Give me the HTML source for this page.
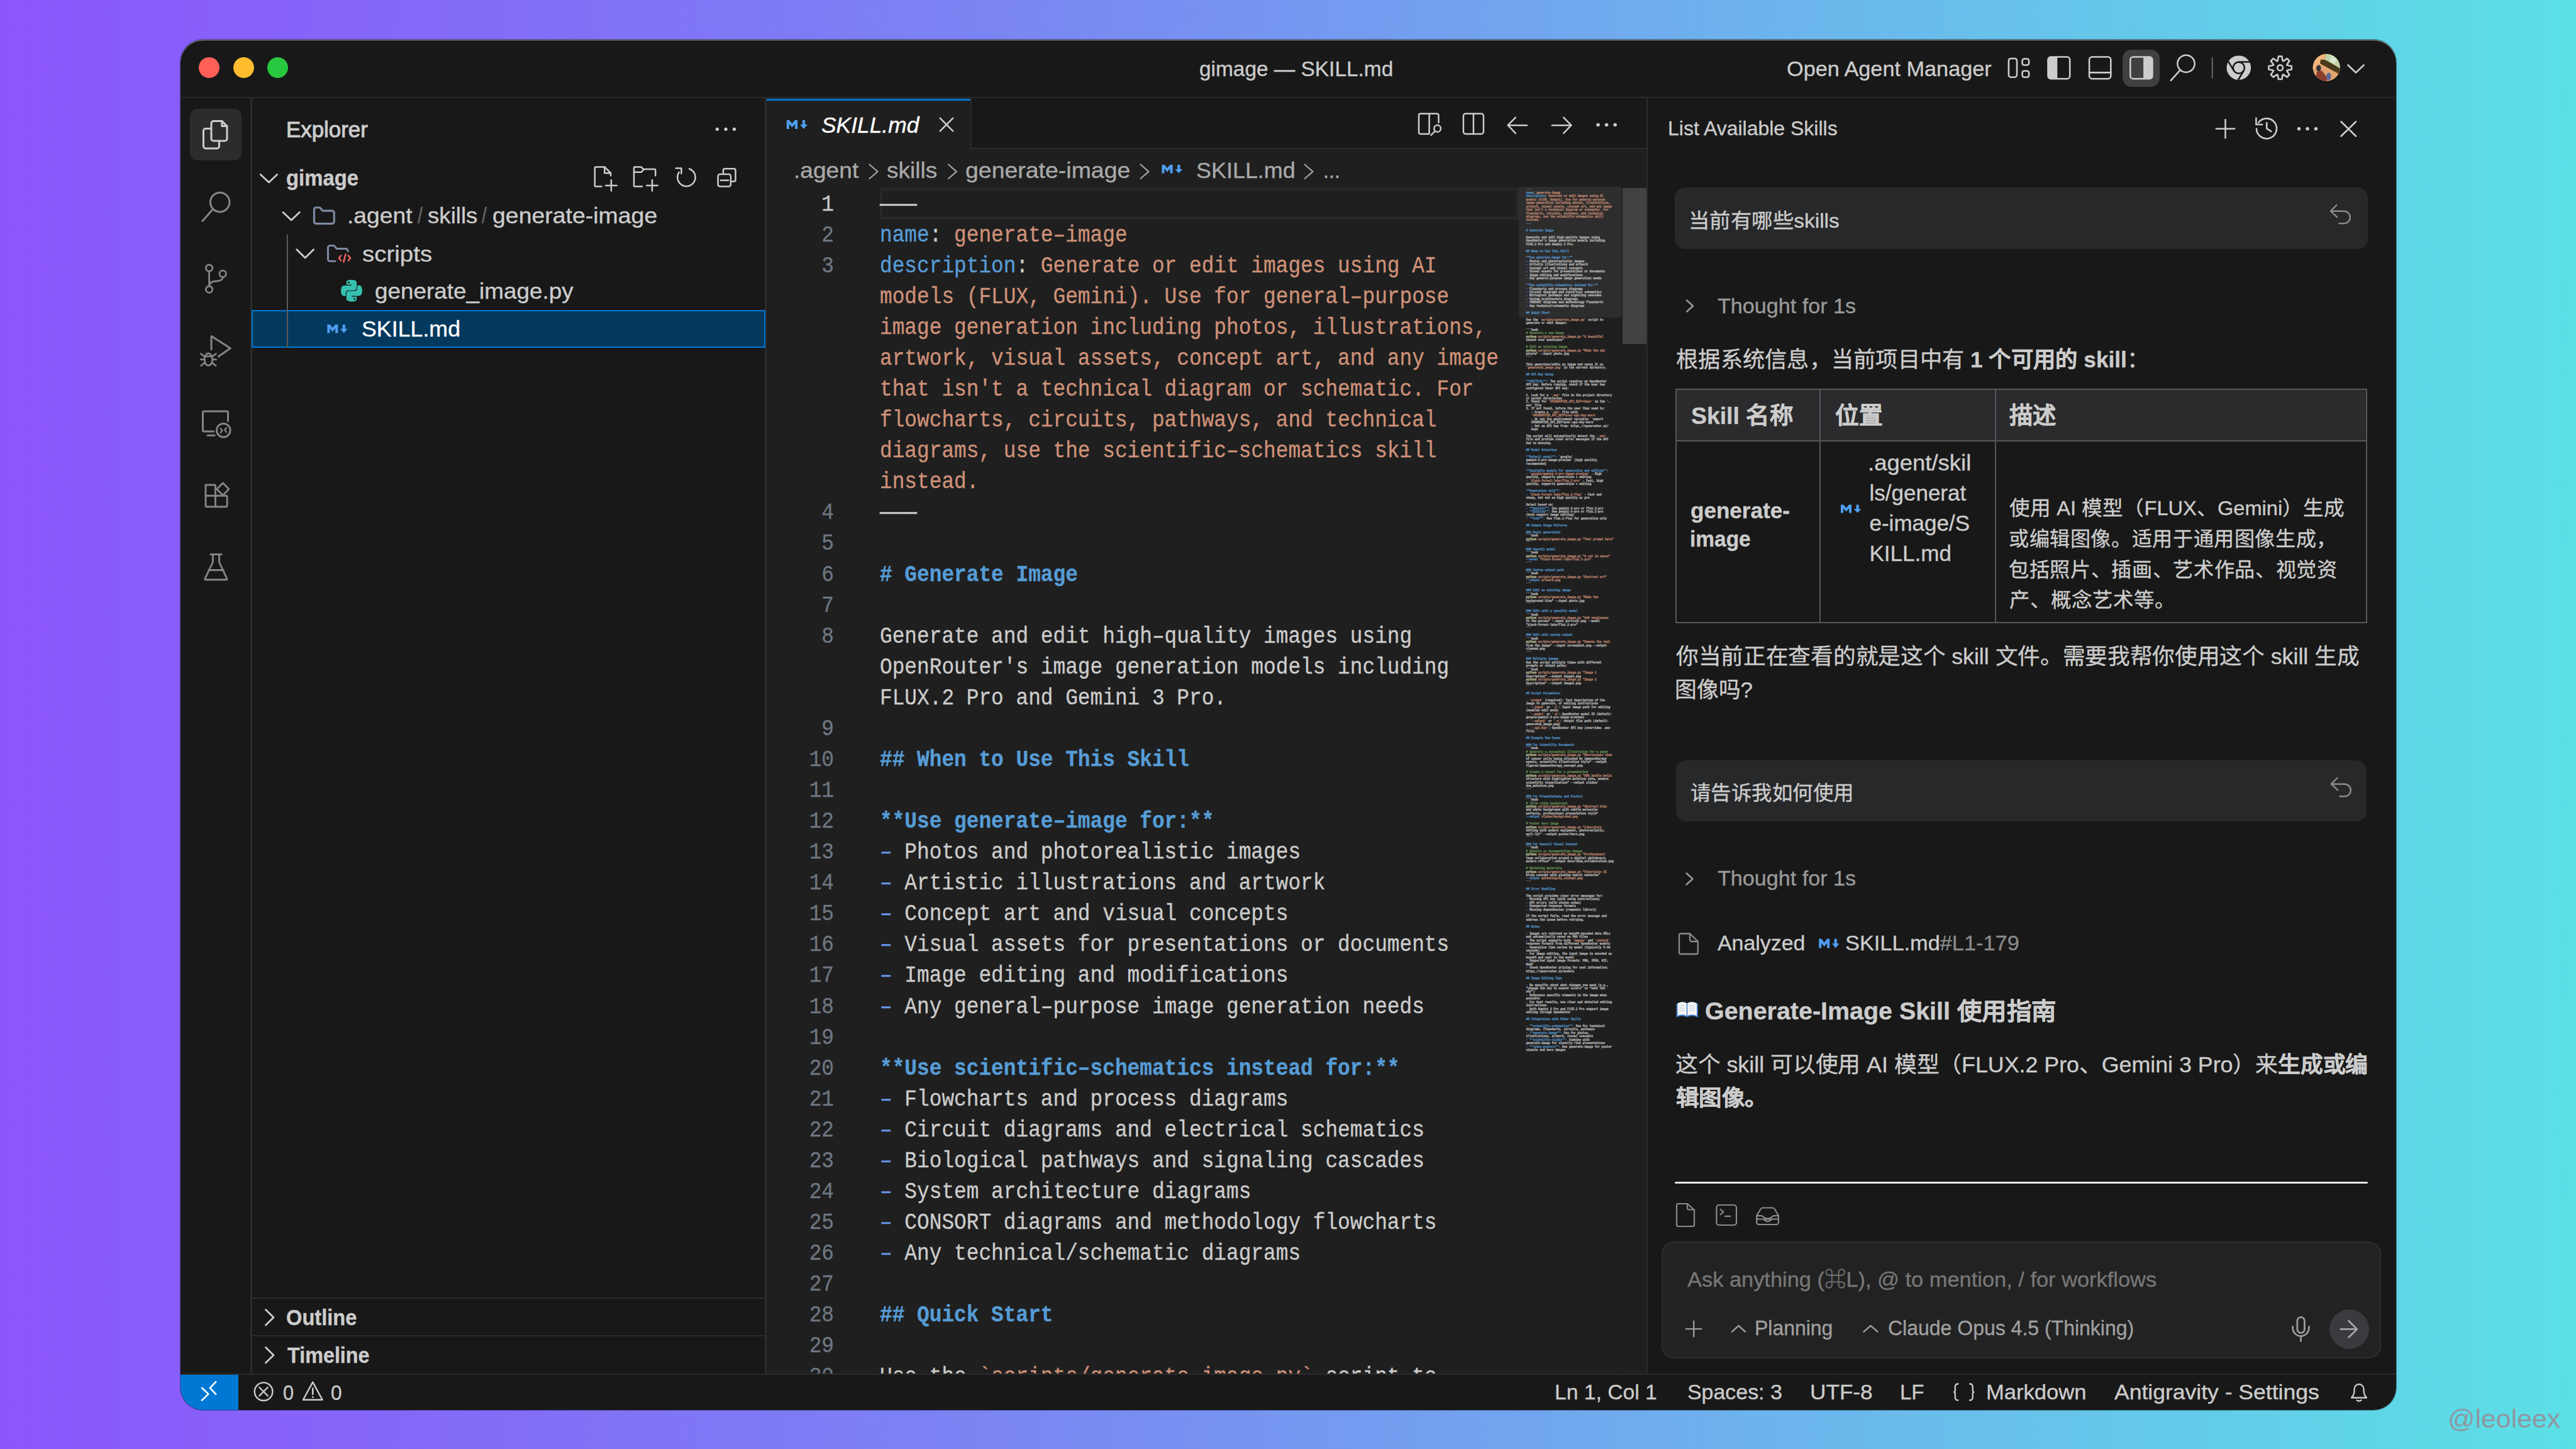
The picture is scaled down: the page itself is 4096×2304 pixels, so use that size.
<!DOCTYPE html><html lang="zh-CN"><head><meta charset="utf-8"><style>
*{margin:0;padding:0;box-sizing:border-box}
html,body{width:4096px;height:2304px;overflow:hidden}
body{position:relative;font-family:"Liberation Sans",sans-serif;background:linear-gradient(90deg,#8b55fb 0%,#7b84f3 38%,#6db3ed 68%,#5be0e6 100%)}
.a{position:absolute}
#win{position:absolute;left:287px;top:63px;width:3523px;height:2179px;border-radius:36px;overflow:hidden;background:#181818;box-shadow:inset 0 1.5px 0 rgba(255,255,255,0.38), 0 0 0 1px rgba(0,0,0,0.35)}
#in{position:absolute;left:-287px;top:-63px;width:4096px;height:2304px}
.t{position:absolute;white-space:pre;line-height:1;color:#cccccc;-webkit-text-stroke-width:0.35px}
.m{font-family:"Liberation Mono",monospace}
svg.ov{position:absolute;left:0;top:0;overflow:visible}
.b{font-weight:bold}
</style></head><body>
<div id="win"><div id="in">
<div class="a" style="left:287px;top:154px;width:3523px;height:2px;background:#2b2b2b;"></div>
<div class="a" style="left:398px;top:156px;width:2.5px;height:2028px;background:#2b2b2b;"></div>
<div class="a" style="left:1216px;top:156px;width:2.5px;height:2028px;background:#2b2b2b;"></div>
<div class="a" style="left:1218.5px;top:156px;width:1399.5px;height:2028px;background:#1f1f1f;"></div>
<div class="a" style="left:1218.5px;top:156px;width:1399.5px;height:81px;background:#181818;"></div>
<div class="a" style="left:1543.5px;top:235px;width:1075px;height:2px;background:#2b2b2b;"></div>
<div class="a" style="left:1218.5px;top:157px;width:325px;height:80px;background:#1f1f1f;"></div>
<div class="a" style="left:1218.5px;top:157px;width:325px;height:3px;background:#0078d4;"></div>
<div class="a" style="left:1542.5px;top:157px;width:2px;height:80px;background:#2b2b2b;"></div>
<div class="a" style="left:2617.5px;top:156px;width:2px;height:2028px;background:#2b2b2b;"></div>
<div class="a" style="left:287px;top:2184px;width:3523px;height:2px;background:#2b2b2b;"></div>
<div class="a" style="left:287px;top:2186px;width:92px;height:56px;background:#0078d4;"></div>
<div class="a" style="left:302.4px;top:173.4px;width:81.5px;height:82px;background:#2c2c2c;border-radius:12px"></div>
<div class="a" style="left:3375.3px;top:78.6px;width:59px;height:59px;background:#404040;border-radius:14px"></div>
<div class="a" style="left:400px;top:492.6px;width:816.5px;height:60px;background:#04395e;border:2.5px solid #0078d4"></div>
<div class="a" style="left:455.7px;top:372.5px;width:2px;height:180px;background:#5a5a5a;"></div>
<div class="a" style="left:400px;top:2063px;width:816px;height:2px;background:#2b2b2b;"></div>
<div class="a" style="left:400px;top:2123px;width:816px;height:2px;background:#2b2b2b;"></div>
<div class="a" style="left:316.0px;top:91.1px;width:33px;height:33px;border-radius:50%;background:#ff5f57"></div>
<div class="a" style="left:370.5px;top:91.1px;width:33px;height:33px;border-radius:50%;background:#febc2e"></div>
<div class="a" style="left:425.0px;top:91.1px;width:33px;height:33px;border-radius:50%;background:#28c840"></div>
<div class="t" id="t0" style="left:1906.99px;top:92.66px;font-size:33px;color:#cccccc;transform:scaleX(1.0123);transform-origin:0 0;">gimage — SKILL.md</div>
<div class="t" id="t1" style="left:2840.96px;top:92.66px;font-size:33px;color:#cccccc;transform:scaleX(1.0383);transform-origin:0 0;">Open Agent Manager</div>
<div class="t" id="t2" style="left:455.41px;top:187.87px;font-size:35px;color:#cccccc;-webkit-text-stroke:1.0px #cccccc;transform:scaleX(0.9962);transform-origin:0 0;">Explorer</div>
<div class="t" id="t3" style="left:455.42px;top:264.87px;font-size:35px;color:#cccccc;font-weight:bold;transform:scaleX(0.9393);transform-origin:0 0;">gimage</div>
<div class="t" id="t4" style="left:551.87px;top:325.37px;font-size:35px;color:#cccccc;transform:scaleX(1.0656);transform-origin:0 0;">.agent</div>
<div class="t" id="t5" style="left:664.00px;top:325.37px;font-size:35px;color:#6a6a6a;transform:scaleX(0.8000);transform-origin:0 0;">/</div>
<div class="t" id="t6" style="left:680.20px;top:325.37px;font-size:35px;color:#cccccc;transform:scaleX(1.0474);transform-origin:0 0;">skills</div>
<div class="t" id="t7" style="left:766.00px;top:325.37px;font-size:35px;color:#6a6a6a;transform:scaleX(0.8000);transform-origin:0 0;">/</div>
<div class="t" id="t8" style="left:783.17px;top:325.37px;font-size:35px;color:#cccccc;transform:scaleX(1.0697);transform-origin:0 0;">generate-image</div>
<div class="t" id="t9" style="left:576.37px;top:385.77px;font-size:35px;color:#cccccc;transform:scaleX(1.0990);transform-origin:0 0;">scripts</div>
<div class="t" id="t10" style="left:596.35px;top:444.67px;font-size:35px;color:#cccccc;transform:scaleX(1.0538);transform-origin:0 0;">generate_image.py</div>
<div class="t" id="t11" style="left:575.37px;top:505.17px;font-size:35px;color:#ffffff;transform:scaleX(1.0219);transform-origin:0 0;">SKILL.md</div>
<div class="t" id="t12" style="left:455.07px;top:2077.17px;font-size:35px;color:#cccccc;font-weight:bold;transform:scaleX(0.9328);transform-origin:0 0;">Outline</div>
<div class="t" id="t13" style="left:456.92px;top:2136.97px;font-size:35px;color:#cccccc;font-weight:bold;transform:scaleX(0.9239);transform-origin:0 0;">Timeline</div>
<div class="t" id="t14" style="left:1306.40px;top:181.69px;font-size:35.8px;color:#ffffff;transform:scaleX(0.9881);transform-origin:0 0;font-style:italic">SKILL.md</div>
<div class="t" id="t15" style="left:1261.88px;top:253.37px;font-size:35px;color:#a9a9a9;transform:scaleX(1.0604);transform-origin:0 0;">.agent</div>
<div class="t" id="t16" style="left:1410.18px;top:253.37px;font-size:35px;color:#a9a9a9;transform:scaleX(1.0587);transform-origin:0 0;">skills</div>
<div class="t" id="t17" style="left:1534.93px;top:253.37px;font-size:35px;color:#a9a9a9;transform:scaleX(1.0700);transform-origin:0 0;">generate-image</div>
<div class="t" id="t18" style="left:1901.97px;top:253.37px;font-size:35px;color:#a9a9a9;transform:scaleX(1.0265);transform-origin:0 0;">SKILL.md</div>
<div class="t" id="t19" style="left:2104.16px;top:253.37px;font-size:35px;color:#a9a9a9;transform:scaleX(0.9200);transform-origin:0 0;">...</div>
<div class="a" style="left:1218.5px;top:237px;width:1399px;height:1947px;overflow:hidden">
<div class="a" style="left:-1218.5px;top:-237px;width:4096px;height:2304px">
<div class="a" style="left:1398.8px;top:299px;width:1016px;height:49.5px;background:transparent;border:4px solid #282828"></div>
<div class="t m" style="left:1225px;width:101px;text-align:right;top:300.70px;height:49.07px;line-height:49.07px;font-size:36.4px;color:#cccccc;transform:scaleX(0.9011);transform-origin:100% 0">1</div>
<div class="t m" style="left:1398.6px;top:300.70px;height:49.07px;line-height:49.07px;font-size:36.4px;color:#cccccc;transform:scaleX(0.9011);transform-origin:0 0"><span style="color:#cccccc">———</span></div>
<div class="t m" style="left:1225px;width:101px;text-align:right;top:349.77px;height:49.07px;line-height:49.07px;font-size:36.4px;color:#6e7681;transform:scaleX(0.9011);transform-origin:100% 0">2</div>
<div class="t m" style="left:1398.6px;top:349.77px;height:49.07px;line-height:49.07px;font-size:36.4px;color:#cccccc;transform:scaleX(0.9011);transform-origin:0 0"><span style="color:#569cd6">name</span><span style="color:#cccccc">: </span><span style="color:#ce9178">generate–image</span></div>
<div class="t m" style="left:1225px;width:101px;text-align:right;top:398.84px;height:49.07px;line-height:49.07px;font-size:36.4px;color:#6e7681;transform:scaleX(0.9011);transform-origin:100% 0">3</div>
<div class="t m" style="left:1398.6px;top:398.84px;height:49.07px;line-height:49.07px;font-size:36.4px;color:#cccccc;transform:scaleX(0.9011);transform-origin:0 0"><span style="color:#569cd6">description</span><span style="color:#cccccc">: </span><span style="color:#ce9178">Generate or edit images using AI</span></div>
<div class="t m" style="left:1398.6px;top:447.91px;height:49.07px;line-height:49.07px;font-size:36.4px;color:#cccccc;transform:scaleX(0.9011);transform-origin:0 0"><span style="color:#ce9178">models (FLUX, Gemini). Use for general–purpose</span></div>
<div class="t m" style="left:1398.6px;top:496.98px;height:49.07px;line-height:49.07px;font-size:36.4px;color:#cccccc;transform:scaleX(0.9011);transform-origin:0 0"><span style="color:#ce9178">image generation including photos, illustrations,</span></div>
<div class="t m" style="left:1398.6px;top:546.05px;height:49.07px;line-height:49.07px;font-size:36.4px;color:#cccccc;transform:scaleX(0.9011);transform-origin:0 0"><span style="color:#ce9178">artwork, visual assets, concept art, and any image</span></div>
<div class="t m" style="left:1398.6px;top:595.12px;height:49.07px;line-height:49.07px;font-size:36.4px;color:#cccccc;transform:scaleX(0.9011);transform-origin:0 0"><span style="color:#ce9178">that isn&#x27;t a technical diagram or schematic. For</span></div>
<div class="t m" style="left:1398.6px;top:644.19px;height:49.07px;line-height:49.07px;font-size:36.4px;color:#cccccc;transform:scaleX(0.9011);transform-origin:0 0"><span style="color:#ce9178">flowcharts, circuits, pathways, and technical</span></div>
<div class="t m" style="left:1398.6px;top:693.26px;height:49.07px;line-height:49.07px;font-size:36.4px;color:#cccccc;transform:scaleX(0.9011);transform-origin:0 0"><span style="color:#ce9178">diagrams, use the scientific–schematics skill</span></div>
<div class="t m" style="left:1398.6px;top:742.33px;height:49.07px;line-height:49.07px;font-size:36.4px;color:#cccccc;transform:scaleX(0.9011);transform-origin:0 0"><span style="color:#ce9178">instead.</span></div>
<div class="t m" style="left:1225px;width:101px;text-align:right;top:791.40px;height:49.07px;line-height:49.07px;font-size:36.4px;color:#6e7681;transform:scaleX(0.9011);transform-origin:100% 0">4</div>
<div class="t m" style="left:1398.6px;top:791.40px;height:49.07px;line-height:49.07px;font-size:36.4px;color:#cccccc;transform:scaleX(0.9011);transform-origin:0 0"><span style="color:#cccccc">———</span></div>
<div class="t m" style="left:1225px;width:101px;text-align:right;top:840.47px;height:49.07px;line-height:49.07px;font-size:36.4px;color:#6e7681;transform:scaleX(0.9011);transform-origin:100% 0">5</div>
<div class="t m" style="left:1398.6px;top:840.47px;height:49.07px;line-height:49.07px;font-size:36.4px;color:#cccccc;transform:scaleX(0.9011);transform-origin:0 0"></div>
<div class="t m" style="left:1225px;width:101px;text-align:right;top:889.54px;height:49.07px;line-height:49.07px;font-size:36.4px;color:#6e7681;transform:scaleX(0.9011);transform-origin:100% 0">6</div>
<div class="t m" style="left:1398.6px;top:889.54px;height:49.07px;line-height:49.07px;font-size:36.4px;color:#cccccc;transform:scaleX(0.9011);transform-origin:0 0"><span style="color:#569cd6;font-weight:bold"># Generate Image</span></div>
<div class="t m" style="left:1225px;width:101px;text-align:right;top:938.61px;height:49.07px;line-height:49.07px;font-size:36.4px;color:#6e7681;transform:scaleX(0.9011);transform-origin:100% 0">7</div>
<div class="t m" style="left:1398.6px;top:938.61px;height:49.07px;line-height:49.07px;font-size:36.4px;color:#cccccc;transform:scaleX(0.9011);transform-origin:0 0"></div>
<div class="t m" style="left:1225px;width:101px;text-align:right;top:987.68px;height:49.07px;line-height:49.07px;font-size:36.4px;color:#6e7681;transform:scaleX(0.9011);transform-origin:100% 0">8</div>
<div class="t m" style="left:1398.6px;top:987.68px;height:49.07px;line-height:49.07px;font-size:36.4px;color:#cccccc;transform:scaleX(0.9011);transform-origin:0 0"><span style="color:#cccccc">Generate and edit high–quality images using</span></div>
<div class="t m" style="left:1398.6px;top:1036.75px;height:49.07px;line-height:49.07px;font-size:36.4px;color:#cccccc;transform:scaleX(0.9011);transform-origin:0 0"><span style="color:#cccccc">OpenRouter&#x27;s image generation models including</span></div>
<div class="t m" style="left:1398.6px;top:1085.82px;height:49.07px;line-height:49.07px;font-size:36.4px;color:#cccccc;transform:scaleX(0.9011);transform-origin:0 0"><span style="color:#cccccc">FLUX.2 Pro and Gemini 3 Pro.</span></div>
<div class="t m" style="left:1225px;width:101px;text-align:right;top:1134.89px;height:49.07px;line-height:49.07px;font-size:36.4px;color:#6e7681;transform:scaleX(0.9011);transform-origin:100% 0">9</div>
<div class="t m" style="left:1398.6px;top:1134.89px;height:49.07px;line-height:49.07px;font-size:36.4px;color:#cccccc;transform:scaleX(0.9011);transform-origin:0 0"></div>
<div class="t m" style="left:1225px;width:101px;text-align:right;top:1183.96px;height:49.07px;line-height:49.07px;font-size:36.4px;color:#6e7681;transform:scaleX(0.9011);transform-origin:100% 0">10</div>
<div class="t m" style="left:1398.6px;top:1183.96px;height:49.07px;line-height:49.07px;font-size:36.4px;color:#cccccc;transform:scaleX(0.9011);transform-origin:0 0"><span style="color:#569cd6;font-weight:bold">## When to Use This Skill</span></div>
<div class="t m" style="left:1225px;width:101px;text-align:right;top:1233.03px;height:49.07px;line-height:49.07px;font-size:36.4px;color:#6e7681;transform:scaleX(0.9011);transform-origin:100% 0">11</div>
<div class="t m" style="left:1398.6px;top:1233.03px;height:49.07px;line-height:49.07px;font-size:36.4px;color:#cccccc;transform:scaleX(0.9011);transform-origin:0 0"></div>
<div class="t m" style="left:1225px;width:101px;text-align:right;top:1282.10px;height:49.07px;line-height:49.07px;font-size:36.4px;color:#6e7681;transform:scaleX(0.9011);transform-origin:100% 0">12</div>
<div class="t m" style="left:1398.6px;top:1282.10px;height:49.07px;line-height:49.07px;font-size:36.4px;color:#cccccc;transform:scaleX(0.9011);transform-origin:0 0"><span style="color:#569cd6;font-weight:bold">**Use generate–image for:**</span></div>
<div class="t m" style="left:1225px;width:101px;text-align:right;top:1331.17px;height:49.07px;line-height:49.07px;font-size:36.4px;color:#6e7681;transform:scaleX(0.9011);transform-origin:100% 0">13</div>
<div class="t m" style="left:1398.6px;top:1331.17px;height:49.07px;line-height:49.07px;font-size:36.4px;color:#cccccc;transform:scaleX(0.9011);transform-origin:0 0"><span style="color:#6796e6">–</span><span style="color:#cccccc"> Photos and photorealistic images</span></div>
<div class="t m" style="left:1225px;width:101px;text-align:right;top:1380.24px;height:49.07px;line-height:49.07px;font-size:36.4px;color:#6e7681;transform:scaleX(0.9011);transform-origin:100% 0">14</div>
<div class="t m" style="left:1398.6px;top:1380.24px;height:49.07px;line-height:49.07px;font-size:36.4px;color:#cccccc;transform:scaleX(0.9011);transform-origin:0 0"><span style="color:#6796e6">–</span><span style="color:#cccccc"> Artistic illustrations and artwork</span></div>
<div class="t m" style="left:1225px;width:101px;text-align:right;top:1429.31px;height:49.07px;line-height:49.07px;font-size:36.4px;color:#6e7681;transform:scaleX(0.9011);transform-origin:100% 0">15</div>
<div class="t m" style="left:1398.6px;top:1429.31px;height:49.07px;line-height:49.07px;font-size:36.4px;color:#cccccc;transform:scaleX(0.9011);transform-origin:0 0"><span style="color:#6796e6">–</span><span style="color:#cccccc"> Concept art and visual concepts</span></div>
<div class="t m" style="left:1225px;width:101px;text-align:right;top:1478.38px;height:49.07px;line-height:49.07px;font-size:36.4px;color:#6e7681;transform:scaleX(0.9011);transform-origin:100% 0">16</div>
<div class="t m" style="left:1398.6px;top:1478.38px;height:49.07px;line-height:49.07px;font-size:36.4px;color:#cccccc;transform:scaleX(0.9011);transform-origin:0 0"><span style="color:#6796e6">–</span><span style="color:#cccccc"> Visual assets for presentations or documents</span></div>
<div class="t m" style="left:1225px;width:101px;text-align:right;top:1527.45px;height:49.07px;line-height:49.07px;font-size:36.4px;color:#6e7681;transform:scaleX(0.9011);transform-origin:100% 0">17</div>
<div class="t m" style="left:1398.6px;top:1527.45px;height:49.07px;line-height:49.07px;font-size:36.4px;color:#cccccc;transform:scaleX(0.9011);transform-origin:0 0"><span style="color:#6796e6">–</span><span style="color:#cccccc"> Image editing and modifications</span></div>
<div class="t m" style="left:1225px;width:101px;text-align:right;top:1576.52px;height:49.07px;line-height:49.07px;font-size:36.4px;color:#6e7681;transform:scaleX(0.9011);transform-origin:100% 0">18</div>
<div class="t m" style="left:1398.6px;top:1576.52px;height:49.07px;line-height:49.07px;font-size:36.4px;color:#cccccc;transform:scaleX(0.9011);transform-origin:0 0"><span style="color:#6796e6">–</span><span style="color:#cccccc"> Any general–purpose image generation needs</span></div>
<div class="t m" style="left:1225px;width:101px;text-align:right;top:1625.59px;height:49.07px;line-height:49.07px;font-size:36.4px;color:#6e7681;transform:scaleX(0.9011);transform-origin:100% 0">19</div>
<div class="t m" style="left:1398.6px;top:1625.59px;height:49.07px;line-height:49.07px;font-size:36.4px;color:#cccccc;transform:scaleX(0.9011);transform-origin:0 0"></div>
<div class="t m" style="left:1225px;width:101px;text-align:right;top:1674.66px;height:49.07px;line-height:49.07px;font-size:36.4px;color:#6e7681;transform:scaleX(0.9011);transform-origin:100% 0">20</div>
<div class="t m" style="left:1398.6px;top:1674.66px;height:49.07px;line-height:49.07px;font-size:36.4px;color:#cccccc;transform:scaleX(0.9011);transform-origin:0 0"><span style="color:#569cd6;font-weight:bold">**Use scientific–schematics instead for:**</span></div>
<div class="t m" style="left:1225px;width:101px;text-align:right;top:1723.73px;height:49.07px;line-height:49.07px;font-size:36.4px;color:#6e7681;transform:scaleX(0.9011);transform-origin:100% 0">21</div>
<div class="t m" style="left:1398.6px;top:1723.73px;height:49.07px;line-height:49.07px;font-size:36.4px;color:#cccccc;transform:scaleX(0.9011);transform-origin:0 0"><span style="color:#6796e6">–</span><span style="color:#cccccc"> Flowcharts and process diagrams</span></div>
<div class="t m" style="left:1225px;width:101px;text-align:right;top:1772.80px;height:49.07px;line-height:49.07px;font-size:36.4px;color:#6e7681;transform:scaleX(0.9011);transform-origin:100% 0">22</div>
<div class="t m" style="left:1398.6px;top:1772.80px;height:49.07px;line-height:49.07px;font-size:36.4px;color:#cccccc;transform:scaleX(0.9011);transform-origin:0 0"><span style="color:#6796e6">–</span><span style="color:#cccccc"> Circuit diagrams and electrical schematics</span></div>
<div class="t m" style="left:1225px;width:101px;text-align:right;top:1821.87px;height:49.07px;line-height:49.07px;font-size:36.4px;color:#6e7681;transform:scaleX(0.9011);transform-origin:100% 0">23</div>
<div class="t m" style="left:1398.6px;top:1821.87px;height:49.07px;line-height:49.07px;font-size:36.4px;color:#cccccc;transform:scaleX(0.9011);transform-origin:0 0"><span style="color:#6796e6">–</span><span style="color:#cccccc"> Biological pathways and signaling cascades</span></div>
<div class="t m" style="left:1225px;width:101px;text-align:right;top:1870.94px;height:49.07px;line-height:49.07px;font-size:36.4px;color:#6e7681;transform:scaleX(0.9011);transform-origin:100% 0">24</div>
<div class="t m" style="left:1398.6px;top:1870.94px;height:49.07px;line-height:49.07px;font-size:36.4px;color:#cccccc;transform:scaleX(0.9011);transform-origin:0 0"><span style="color:#6796e6">–</span><span style="color:#cccccc"> System architecture diagrams</span></div>
<div class="t m" style="left:1225px;width:101px;text-align:right;top:1920.01px;height:49.07px;line-height:49.07px;font-size:36.4px;color:#6e7681;transform:scaleX(0.9011);transform-origin:100% 0">25</div>
<div class="t m" style="left:1398.6px;top:1920.01px;height:49.07px;line-height:49.07px;font-size:36.4px;color:#cccccc;transform:scaleX(0.9011);transform-origin:0 0"><span style="color:#6796e6">–</span><span style="color:#cccccc"> CONSORT diagrams and methodology flowcharts</span></div>
<div class="t m" style="left:1225px;width:101px;text-align:right;top:1969.08px;height:49.07px;line-height:49.07px;font-size:36.4px;color:#6e7681;transform:scaleX(0.9011);transform-origin:100% 0">26</div>
<div class="t m" style="left:1398.6px;top:1969.08px;height:49.07px;line-height:49.07px;font-size:36.4px;color:#cccccc;transform:scaleX(0.9011);transform-origin:0 0"><span style="color:#6796e6">–</span><span style="color:#cccccc"> Any technical/schematic diagrams</span></div>
<div class="t m" style="left:1225px;width:101px;text-align:right;top:2018.15px;height:49.07px;line-height:49.07px;font-size:36.4px;color:#6e7681;transform:scaleX(0.9011);transform-origin:100% 0">27</div>
<div class="t m" style="left:1398.6px;top:2018.15px;height:49.07px;line-height:49.07px;font-size:36.4px;color:#cccccc;transform:scaleX(0.9011);transform-origin:0 0"></div>
<div class="t m" style="left:1225px;width:101px;text-align:right;top:2067.22px;height:49.07px;line-height:49.07px;font-size:36.4px;color:#6e7681;transform:scaleX(0.9011);transform-origin:100% 0">28</div>
<div class="t m" style="left:1398.6px;top:2067.22px;height:49.07px;line-height:49.07px;font-size:36.4px;color:#cccccc;transform:scaleX(0.9011);transform-origin:0 0"><span style="color:#569cd6;font-weight:bold">## Quick Start</span></div>
<div class="t m" style="left:1225px;width:101px;text-align:right;top:2116.29px;height:49.07px;line-height:49.07px;font-size:36.4px;color:#6e7681;transform:scaleX(0.9011);transform-origin:100% 0">29</div>
<div class="t m" style="left:1398.6px;top:2116.29px;height:49.07px;line-height:49.07px;font-size:36.4px;color:#cccccc;transform:scaleX(0.9011);transform-origin:0 0"></div>
<div class="t m" style="left:1225px;width:101px;text-align:right;top:2165.36px;height:49.07px;line-height:49.07px;font-size:36.4px;color:#6e7681;transform:scaleX(0.9011);transform-origin:100% 0">30</div>
<div class="t m" style="left:1398.6px;top:2165.36px;height:49.07px;line-height:49.07px;font-size:36.4px;color:#cccccc;transform:scaleX(0.9011);transform-origin:0 0"><span style="color:#cccccc">Use the </span><span style="color:#ce9178">`scripts/generate_image.py`</span><span style="color:#cccccc"> script to</span></div>
</div></div>
<div class="a" style="left:2414.5px;top:297px;width:165px;height:208px;background:rgba(121,121,121,0.16);"></div>
<div class="a" style="left:2579.5px;top:299px;width:38px;height:248px;background:rgba(121,121,121,0.40);"></div>
<div class="a" style="left:2578.8px;top:237px;width:1.6px;height:1947px;background:#191919;"></div>
<div class="a" style="left:2414px;top:237px;width:165px;height:1947px;overflow:hidden"><div class="t m" style="left:12.50px;top:61.40px;font-size:4.55px;line-height:5.45px;font-weight:bold;opacity:0.78"><span style="color:#569cd6">---</span><span style="color:#ce9178"></span>
<span style="color:#569cd6">name</span><span style="color:#cccccc">: </span><span style="color:#ce9178">generate-image</span>
<span style="color:#569cd6">description</span><span style="color:#cccccc">: </span><span style="color:#ce9178">Generate or edit images using AI</span>
<span style="color:#ce9178">models (FLUX, Gemini). Use for general-purpose</span>
<span style="color:#ce9178">image generation including photos, illustrations,</span>
<span style="color:#ce9178">artwork, visual assets, concept art, and any image</span>
<span style="color:#ce9178">that isn&#x27;t a technical diagram or schematic. For</span>
<span style="color:#ce9178">flowcharts, circuits, pathways, and technical</span>
<span style="color:#ce9178">diagrams, use the scientific-schematics skill</span>
<span style="color:#ce9178">instead.</span>
<span style="color:#569cd6">---</span><span style="color:#ce9178"></span>
<span style="color:#cccccc"></span>
<span style="color:#569cd6"># Generate Image</span>
<span style="color:#cccccc"></span>
<span style="color:#cccccc">Generate and edit high-quality images using</span>
<span style="color:#cccccc">OpenRouter&#x27;s image generation models including</span>
<span style="color:#cccccc">FLUX.2 Pro and Gemini 3 Pro.</span>
<span style="color:#cccccc"></span>
<span style="color:#569cd6">## When to Use This Skill</span>
<span style="color:#cccccc"></span>
<span style="color:#569cd6">**Use generate-image for:**</span><span style="color:#cccccc"></span>
<span style="color:#6796e6">-</span><span style="color:#cccccc"> Photos and photorealistic images</span>
<span style="color:#6796e6">-</span><span style="color:#cccccc"> Artistic illustrations and artwork</span>
<span style="color:#6796e6">-</span><span style="color:#cccccc"> Concept art and visual concepts</span>
<span style="color:#6796e6">-</span><span style="color:#cccccc"> Visual assets for presentations or documents</span>
<span style="color:#6796e6">-</span><span style="color:#cccccc"> Image editing and modifications</span>
<span style="color:#6796e6">-</span><span style="color:#cccccc"> Any general-purpose image generation needs</span>
<span style="color:#cccccc"></span>
<span style="color:#569cd6">**Use scientific-schematics instead for:**</span><span style="color:#cccccc"></span>
<span style="color:#6796e6">-</span><span style="color:#cccccc"> Flowcharts and process diagrams</span>
<span style="color:#6796e6">-</span><span style="color:#cccccc"> Circuit diagrams and electrical schematics</span>
<span style="color:#6796e6">-</span><span style="color:#cccccc"> Biological pathways and signaling cascades</span>
<span style="color:#6796e6">-</span><span style="color:#cccccc"> System architecture diagrams</span>
<span style="color:#6796e6">-</span><span style="color:#cccccc"> CONSORT diagrams and methodology flowcharts</span>
<span style="color:#6796e6">-</span><span style="color:#cccccc"> Any technical/schematic diagrams</span>
<span style="color:#cccccc"></span>
<span style="color:#569cd6">## Quick Start</span>
<span style="color:#cccccc"></span>
<span style="color:#cccccc">Use the </span><span style="color:#ce9178">`scripts/generate_image.py`</span><span style="color:#cccccc"> script to</span>
<span style="color:#cccccc">generate or edit images:</span>
<span style="color:#cccccc"></span>
<span style="color:#cccccc">```bash</span>
<span style="color:#6a9955"># Generate a new image</span>
<span style="color:#dcdcaa">python</span><span style="color:#ce9178"> scripts/generate_image.py &quot;A beautiful</span>
<span style="color:#cccccc">sunset over mountains&quot;</span>
<span style="color:#cccccc"></span>
<span style="color:#6a9955"># Edit an existing image</span>
<span style="color:#dcdcaa">python</span><span style="color:#ce9178"> scripts/generate_image.py &quot;Make the sky</span>
<span style="color:#cccccc">purple&quot; --input photo.jpg</span>
<span style="color:#cccccc">```</span>
<span style="color:#cccccc"></span>
<span style="color:#cccccc">This generates/edits an image and saves it as</span>
<span style="color:#cccccc"></span><span style="color:#ce9178">`generated_image.png`</span><span style="color:#cccccc"> in the current directory.</span>
<span style="color:#cccccc"></span>
<span style="color:#569cd6">## API Key Setup</span>
<span style="color:#cccccc"></span>
<span style="color:#569cd6">**CRITICAL**:</span><span style="color:#cccccc"> The script requires an OpenRouter</span>
<span style="color:#cccccc">API key. Before running, check if the user has</span>
<span style="color:#cccccc">configured their API key:</span>
<span style="color:#cccccc"></span>
<span style="color:#cccccc">1. Look for a </span><span style="color:#ce9178">`.env`</span><span style="color:#cccccc"> file in the project directory</span>
<span style="color:#cccccc">or parent directories</span>
<span style="color:#cccccc">2. Check for </span><span style="color:#ce9178">`OPENROUTER_API_KEY=&lt;key&gt;`</span><span style="color:#cccccc"> in the `.</span>
<span style="color:#cccccc">env` file</span>
<span style="color:#cccccc">3. If not found, inform the user they need to:</span>
<span style="color:#cccccc">   - Create a </span><span style="color:#ce9178">`.env`</span><span style="color:#cccccc"> file with</span>
<span style="color:#cccccc">   </span><span style="color:#ce9178">`OPENROUTER_API_KEY=your-api-key-here`</span><span style="color:#cccccc"></span>
<span style="color:#cccccc">   - Or set the environment variable: `export</span>
<span style="color:#cccccc">   OPENROUTER_API_KEY=your-api-key-here`</span>
<span style="color:#cccccc">   - Get an API key from: https_//openrouter.ai/</span>
<span style="color:#cccccc">   keys</span>
<span style="color:#cccccc"></span>
<span style="color:#cccccc">The script will automatically detect the </span><span style="color:#ce9178">`.env`</span><span style="color:#cccccc"></span>
<span style="color:#cccccc">file and provide clear error messages if the API</span>
<span style="color:#cccccc">key is missing.</span>
<span style="color:#cccccc"></span>
<span style="color:#569cd6">## Model Selection</span>
<span style="color:#cccccc"></span>
<span style="color:#569cd6">**Default model**:</span><span style="color:#cccccc"> `google/</span>
<span style="color:#cccccc">gemini-3-pro-image-preview` (high quality,</span>
<span style="color:#cccccc">recommended)</span>
<span style="color:#cccccc"></span>
<span style="color:#569cd6">**Available models for generation and editing**:</span><span style="color:#cccccc"></span>
<span style="color:#6796e6">-</span><span style="color:#cccccc"> </span><span style="color:#ce9178">`google/gemini-3-pro-image-preview`</span><span style="color:#cccccc"> - High</span>
<span style="color:#cccccc">quality, supports generation + editing</span>
<span style="color:#6796e6">-</span><span style="color:#cccccc"> </span><span style="color:#ce9178">`black-forest-labs/flux.2-pro`</span><span style="color:#cccccc"> - Fast, high</span>
<span style="color:#cccccc">quality, supports generation + editing</span>
<span style="color:#cccccc"></span>
<span style="color:#569cd6">**Generation only**:</span><span style="color:#cccccc"></span>
<span style="color:#6796e6">-</span><span style="color:#cccccc"> </span><span style="color:#ce9178">`black-forest-labs/flux.2-flex`</span><span style="color:#cccccc"> - Fast and</span>
<span style="color:#cccccc">cheap, but not as high quality as pro</span>
<span style="color:#cccccc"></span>
<span style="color:#cccccc">Select based on:</span>
<span style="color:#6796e6">- </span><span style="color:#569cd6">**Quality**:</span><span style="color:#cccccc"> Use gemini-3-pro or flux.2-pro</span>
<span style="color:#6796e6">- </span><span style="color:#569cd6">**Editing**:</span><span style="color:#cccccc"> Use gemini-3-pro or flux.2-pro</span>
<span style="color:#cccccc">(both support image editing)</span>
<span style="color:#6796e6">- </span><span style="color:#569cd6">**Cost**:</span><span style="color:#cccccc"> Use flux.2-flex for generation only</span>
<span style="color:#cccccc"></span>
<span style="color:#569cd6">## Common Usage Patterns</span>
<span style="color:#cccccc"></span>
<span style="color:#569cd6">### Basic generation</span>
<span style="color:#cccccc">```bash</span>
<span style="color:#dcdcaa">python</span><span style="color:#ce9178"> scripts/generate_image.py &quot;Your prompt here&quot;</span>
<span style="color:#cccccc">```</span>
<span style="color:#cccccc"></span>
<span style="color:#569cd6">### Specify model</span>
<span style="color:#cccccc">```bash</span>
<span style="color:#dcdcaa">python</span><span style="color:#ce9178"> scripts/generate_image.py &quot;A cat in space&quot;</span>
<span style="color:#569cd6">--model</span><span style="color:#ce9178"> &quot;black-forest-labs/flux.2-pro&quot;</span>
<span style="color:#cccccc">```</span>
<span style="color:#cccccc"></span>
<span style="color:#569cd6">### Custom output path</span>
<span style="color:#cccccc">```bash</span>
<span style="color:#dcdcaa">python</span><span style="color:#ce9178"> scripts/generate_image.py &quot;Abstract art&quot;</span>
<span style="color:#569cd6">--output</span><span style="color:#ce9178"> artwork.png</span>
<span style="color:#cccccc">```</span>
<span style="color:#cccccc"></span>
<span style="color:#569cd6">### Edit an existing image</span>
<span style="color:#cccccc">```bash</span>
<span style="color:#dcdcaa">python</span><span style="color:#ce9178"> scripts/generate_image.py &quot;Make the</span>
<span style="color:#cccccc">background blue&quot; --input photo.jpg</span>
<span style="color:#cccccc">```</span>
<span style="color:#cccccc"></span>
<span style="color:#569cd6">### Edit with a specific model</span>
<span style="color:#cccccc">```bash</span>
<span style="color:#dcdcaa">python</span><span style="color:#ce9178"> scripts/generate_image.py &quot;Add sunglasses</span>
<span style="color:#cccccc">to the person&quot; --input portrait.png --model</span>
<span style="color:#cccccc">&quot;black-forest-labs/flux.2-pro&quot;</span>
<span style="color:#cccccc">```</span>
<span style="color:#cccccc"></span>
<span style="color:#569cd6">### Edit with custom output</span>
<span style="color:#cccccc">```bash</span>
<span style="color:#dcdcaa">python</span><span style="color:#ce9178"> scripts/generate_image.py &quot;Remove the text</span>
<span style="color:#cccccc">from the image&quot; --input screenshot.png --output</span>
<span style="color:#cccccc">cleaned.png</span>
<span style="color:#cccccc">```</span>
<span style="color:#cccccc"></span>
<span style="color:#569cd6">### Multiple images</span>
<span style="color:#cccccc">Run the script multiple times with different</span>
<span style="color:#cccccc">prompts or output paths:</span>
<span style="color:#cccccc">```bash</span>
<span style="color:#dcdcaa">python</span><span style="color:#ce9178"> scripts/generate_image.py &quot;Image 1</span>
<span style="color:#cccccc">description&quot; --output image1.png</span>
<span style="color:#dcdcaa">python</span><span style="color:#ce9178"> scripts/generate_image.py &quot;Image 2</span>
<span style="color:#cccccc">description&quot; --output image2.png</span>
<span style="color:#cccccc">```</span>
<span style="color:#cccccc"></span>
<span style="color:#569cd6">## Script Parameters</span>
<span style="color:#cccccc"></span>
<span style="color:#6796e6">-</span><span style="color:#cccccc"> </span><span style="color:#ce9178">`prompt`</span><span style="color:#cccccc"> (required): Text description of the</span>
<span style="color:#cccccc">image to generate, or editing instructions</span>
<span style="color:#6796e6">-</span><span style="color:#cccccc"> </span><span style="color:#ce9178">`--input`</span><span style="color:#cccccc"> or </span><span style="color:#ce9178">`-i`</span><span style="color:#cccccc">: Input image path for editing</span>
<span style="color:#cccccc">(enables edit mode)</span>
<span style="color:#6796e6">-</span><span style="color:#cccccc"> </span><span style="color:#ce9178">`--model`</span><span style="color:#cccccc"> or </span><span style="color:#ce9178">`-m`</span><span style="color:#cccccc">: OpenRouter model ID (default:</span>
<span style="color:#cccccc">google/gemini-3-pro-image-preview)</span>
<span style="color:#6796e6">-</span><span style="color:#cccccc"> </span><span style="color:#ce9178">`--output`</span><span style="color:#cccccc"> or </span><span style="color:#ce9178">`-o`</span><span style="color:#cccccc">: Output file path (default:</span>
<span style="color:#cccccc">generated_image.png)</span>
<span style="color:#6796e6">-</span><span style="color:#cccccc"> </span><span style="color:#ce9178">`--api-key`</span><span style="color:#cccccc">: OpenRouter API key (overrides .env</span>
<span style="color:#cccccc">file)</span>
<span style="color:#cccccc"></span>
<span style="color:#569cd6">## Example Use Cases</span>
<span style="color:#cccccc"></span>
<span style="color:#569cd6">### For Scientific Documents</span>
<span style="color:#cccccc">```bash</span>
<span style="color:#6a9955"># Generate a conceptual illustration for a paper</span>
<span style="color:#dcdcaa">python</span><span style="color:#ce9178"> scripts/generate_image.py &quot;Microscopic view</span>
<span style="color:#cccccc">of cancer cells being attacked by immunotherapy</span>
<span style="color:#cccccc">agents, scientific illustration style&quot; --output</span>
<span style="color:#cccccc">figures/immunotherapy_concept.png</span>
<span style="color:#cccccc"></span>
<span style="color:#6a9955"># Create a visual for a presentation</span>
<span style="color:#dcdcaa">python</span><span style="color:#ce9178"> scripts/generate_image.py &quot;DNA double helix</span>
<span style="color:#cccccc">structure with highlighted mutation site, modern</span>
<span style="color:#cccccc">scientific visualization&quot; --output slides/</span>
<span style="color:#cccccc">dna_mutation.png</span>
<span style="color:#cccccc">```</span>
<span style="color:#cccccc"></span>
<span style="color:#569cd6">### For Presentations and Posters</span>
<span style="color:#cccccc">```bash</span>
<span style="color:#6a9955"># Title slide background</span>
<span style="color:#dcdcaa">python</span><span style="color:#ce9178"> scripts/generate_image.py &quot;Abstract blue</span>
<span style="color:#cccccc">and white background with subtle molecular</span>
<span style="color:#cccccc">patterns, professional presentation style&quot;</span>
<span style="color:#569cd6">--output</span><span style="color:#ce9178"> slides/background.png</span>
<span style="color:#cccccc"></span>
<span style="color:#6a9955"># Poster hero image</span>
<span style="color:#dcdcaa">python</span><span style="color:#ce9178"> scripts/generate_image.py &quot;Laboratory</span>
<span style="color:#cccccc">setting with modern equipment, photorealistic,</span>
<span style="color:#cccccc">well-lit&quot; --output poster/hero.png</span>
<span style="color:#cccccc">```</span>
<span style="color:#cccccc"></span>
<span style="color:#569cd6">### For General Visual Content</span>
<span style="color:#cccccc">```bash</span>
<span style="color:#6a9955"># Website or documentation images</span>
<span style="color:#dcdcaa">python</span><span style="color:#ce9178"> scripts/generate_image.py &quot;Professional</span>
<span style="color:#cccccc">team collaboration around a digital whiteboard,</span>
<span style="color:#cccccc">modern office&quot; --output docs/team_collaboration.png</span>
<span style="color:#cccccc"></span>
<span style="color:#6a9955"># Marketing materials</span>
<span style="color:#dcdcaa">python</span><span style="color:#ce9178"> scripts/generate_image.py &quot;Futuristic AI</span>
<span style="color:#cccccc">brain concept with glowing neural networks&quot;</span>
<span style="color:#569cd6">--output</span><span style="color:#ce9178"> marketing/ai_concept.png</span>
<span style="color:#cccccc">```</span>
<span style="color:#cccccc"></span>
<span style="color:#569cd6">## Error Handling</span>
<span style="color:#cccccc"></span>
<span style="color:#cccccc">The script provides clear error messages for:</span>
<span style="color:#6796e6">-</span><span style="color:#cccccc"> Missing API key (with setup instructions)</span>
<span style="color:#6796e6">-</span><span style="color:#cccccc"> API errors (with status codes)</span>
<span style="color:#6796e6">-</span><span style="color:#cccccc"> Unexpected response formats</span>
<span style="color:#6796e6">-</span><span style="color:#cccccc"> Missing dependencies (requests library)</span>
<span style="color:#cccccc"></span>
<span style="color:#cccccc">If the script fails, read the error message and</span>
<span style="color:#cccccc">address the issue before retrying.</span>
<span style="color:#cccccc"></span>
<span style="color:#569cd6">## Notes</span>
<span style="color:#cccccc"></span>
<span style="color:#6796e6">-</span><span style="color:#cccccc"> Images are returned as base64-encoded data URLs</span>
<span style="color:#cccccc">and automatically saved as PNG files</span>
<span style="color:#6796e6">-</span><span style="color:#cccccc"> The script supports both </span><span style="color:#ce9178">`images`</span><span style="color:#cccccc"> and </span><span style="color:#ce9178">`content`</span><span style="color:#cccccc"></span>
<span style="color:#cccccc">response formats from different OpenRouter models</span>
<span style="color:#6796e6">-</span><span style="color:#cccccc"> Generation time varies by model (typically 5-30</span>
<span style="color:#cccccc">seconds)</span>
<span style="color:#6796e6">-</span><span style="color:#cccccc"> For image editing, the input image is encoded as</span>
<span style="color:#cccccc">base64 and sent to the model</span>
<span style="color:#6796e6">-</span><span style="color:#cccccc"> Supported input image formats: PNG, JPEG, GIF,</span>
<span style="color:#cccccc">WebP</span>
<span style="color:#6796e6">-</span><span style="color:#cccccc"> Check OpenRouter pricing for cost information:</span>
<span style="color:#cccccc">https_//openrouter.ai/models</span>
<span style="color:#cccccc"></span>
<span style="color:#569cd6">## Image Editing Tips</span>
<span style="color:#cccccc"></span>
<span style="color:#6796e6">-</span><span style="color:#cccccc"> Be specific about what changes you want (e.g.,</span>
<span style="color:#cccccc">&quot;change the sky to sunset colors&quot; vs &quot;edit the</span>
<span style="color:#cccccc">sky&quot;)</span>
<span style="color:#6796e6">-</span><span style="color:#cccccc"> Reference specific elements in the image when</span>
<span style="color:#cccccc">possible</span>
<span style="color:#6796e6">-</span><span style="color:#cccccc"> For best results, use clear and detailed editing</span>
<span style="color:#cccccc">instructions</span>
<span style="color:#6796e6">-</span><span style="color:#cccccc"> Both Gemini 3 Pro and FLUX.2 Pro support image</span>
<span style="color:#cccccc">editing through OpenRouter</span>
<span style="color:#cccccc"></span>
<span style="color:#569cd6">## Integration with Other Skills</span>
<span style="color:#cccccc"></span>
<span style="color:#6796e6">- </span><span style="color:#569cd6">**scientific-schematics**:</span><span style="color:#cccccc"> Use for technical</span>
<span style="color:#cccccc">diagrams, flowcharts, circuits, pathways</span>
<span style="color:#6796e6">- </span><span style="color:#569cd6">**generate-image**:</span><span style="color:#cccccc"> Use for photos,</span>
<span style="color:#cccccc">illustrations, artwork, visual concepts</span>
<span style="color:#6796e6">- </span><span style="color:#569cd6">**scientific-slides**:</span><span style="color:#cccccc"> Combine with</span>
<span style="color:#cccccc">generate-image for visually rich presentations</span>
<span style="color:#6796e6">- </span><span style="color:#569cd6">**latex-posters**:</span><span style="color:#cccccc"> Use generate-image for poster</span>
<span style="color:#cccccc">visuals and hero images</span></div></div>
<div class="t" id="t20" style="left:2651.95px;top:188.75px;font-size:31px;color:#cccccc;transform:scaleX(1.0319);transform-origin:0 0;">List Available Skills</div>
<div class="a" style="left:2663.4px;top:298px;width:1101.4px;height:97.7px;background:#27282a;border-radius:16px"></div>
<div class="t" id="t21" style="left:2684.86px;top:335.41px;font-size:32px;color:#cccccc;transform:scaleX(1.0456);transform-origin:0 0;">当前有哪些skills</div>
<div class="t" id="t22" style="left:2731.00px;top:468.81px;font-size:34px;color:#9a9a9a;transform:scaleX(1.0041);transform-origin:0 0;">Thought for 1s</div>
<div class="t" id="t23" style="left:2664.60px;top:554.37px;font-size:35px;color:#cccccc;transform:scaleX(1.0072);transform-origin:0 0;">根据系统信息，当前项目中有 <b>1 个可用的 skill</b>：</div>
<div class="a" style="left:2664.3px;top:618.2px;width:1100px;height:373px;background:transparent;border:2px solid #58585c"></div>
<div class="a" style="left:2666.3px;top:620.2px;width:1096px;height:80px;background:#2b2b2d;"></div>
<div class="a" style="left:2664.3px;top:699.5px;width:1100px;height:2px;background:#58585c;"></div>
<div class="a" style="left:2892.6px;top:618.2px;width:2px;height:373px;background:#58585c;"></div>
<div class="a" style="left:3171.6px;top:618.2px;width:2px;height:373px;background:#58585c;"></div>
<div class="t" id="t24" style="left:2688.70px;top:643.17px;font-size:37px;color:#cccccc;font-weight:bold;transform:scaleX(1.0106);transform-origin:0 0;">Skill 名称</div>
<div class="t" id="t25" style="left:2917.61px;top:643.17px;font-size:37px;color:#cccccc;font-weight:bold;transform:scaleX(1.0219);transform-origin:0 0;">位置</div>
<div class="t" id="t26" style="left:3195.30px;top:643.17px;font-size:37px;color:#cccccc;font-weight:bold;transform:scaleX(1.0081);transform-origin:0 0;">描述</div>
<div class="t" id="t27" style="left:2688.40px;top:793.87px;font-size:35px;color:#cccccc;font-weight:bold;transform:scaleX(1.0019);transform-origin:0 0;">generate-</div>
<div class="t" id="t28" style="left:2687.46px;top:839.37px;font-size:35px;color:#cccccc;font-weight:bold;transform:scaleX(0.9560);transform-origin:0 0;">image</div>
<div class="t" id="t29" style="left:2969.89px;top:717.67px;font-size:35px;color:#cccccc;transform:scaleX(1.0422);transform-origin:0 0;">.agent/skil</div>
<div class="t" id="t30" style="left:2972.50px;top:765.77px;font-size:35px;color:#cccccc;">ls/generat</div>
<div class="t" id="t31" style="left:2972.50px;top:813.87px;font-size:35px;color:#cccccc;">e-image/S</div>
<div class="t" id="t32" style="left:2972.50px;top:861.97px;font-size:35px;color:#cccccc;">KILL.md</div>
<div class="t" id="t33" style="left:3195.39px;top:793.33px;font-size:31.5px;color:#cccccc;transform:scaleX(1.0348);transform-origin:0 0;">使用 AI 模型（FLUX、Gemini）生成</div>
<div class="t" id="t34" style="left:3194.37px;top:842.03px;font-size:31.5px;color:#cccccc;transform:scaleX(1.0194);transform-origin:0 0;">或编辑图像。适用于通用图像生成，</div>
<div class="t" id="t35" style="left:3194.37px;top:890.73px;font-size:31.5px;color:#cccccc;transform:scaleX(1.0208);transform-origin:0 0;">包括照片、插画、艺术作品、视觉资</div>
<div class="t" id="t36" style="left:3195.39px;top:939.43px;font-size:31.5px;color:#cccccc;transform:scaleX(1.0309);transform-origin:0 0;">产、概念艺术等。</div>
<div class="t" id="t37" style="left:2664.80px;top:1026.37px;font-size:35px;color:#cccccc;transform:scaleX(1.0197);transform-origin:0 0;">你当前正在查看的就是这个 skill 文件。需要我帮你使用这个 skill 生成</div>
<div class="t" id="t38" style="left:2662.81px;top:1078.87px;font-size:35px;color:#cccccc;transform:scaleX(0.9943);transform-origin:0 0;">图像吗?</div>
<div class="a" style="left:2664.8px;top:1209.4px;width:1098.7px;height:96.8px;background:#27282a;border-radius:16px"></div>
<div class="t" id="t39" style="left:2687.60px;top:1245.41px;font-size:32px;color:#cccccc;transform:scaleX(1.0142);transform-origin:0 0;">请告诉我如何使用</div>
<div class="t" id="t40" style="left:2730.50px;top:1379.01px;font-size:34px;color:#9a9a9a;transform:scaleX(1.0041);transform-origin:0 0;">Thought for 1s</div>
<div class="t" id="t41" style="left:2731.00px;top:1482.41px;font-size:34px;color:#cccccc;transform:scaleX(0.9971);transform-origin:0 0;">Analyzed</div>
<div class="t" id="t42" style="left:2933.99px;top:1482.41px;font-size:34px;color:#cccccc;transform:scaleX(1.0096);transform-origin:0 0;">SKILL.md<span style="color:#8a8a8a">#L1-179</span></div>
<div class="t" id="t43" style="left:2710.96px;top:1588.83px;font-size:38px;color:#cccccc;font-weight:bold;transform:scaleX(1.0373);transform-origin:0 0;">Generate-Image Skill 使用指南</div>
<div class="t" id="t44" style="left:2663.57px;top:1674.87px;font-size:35px;color:#cccccc;transform:scaleX(1.0220);transform-origin:0 0;">这个 skill 可以使用 AI 模型（FLUX.2 Pro、Gemini 3 Pro）来<b>生成或编</b></div>
<div class="t" id="t45" style="left:2664.59px;top:1728.37px;font-size:35px;color:#cccccc;transform:scaleX(1.0403);transform-origin:0 0;"><b>辑图像。</b></div>
<div class="a" style="left:2663.3px;top:1879px;width:1102px;height:3px;background:#e6e6e6;border-radius:2px"></div>
<div class="a" style="left:2642px;top:1973.6px;width:1144px;height:186.4px;background:#222222;border:2px solid #2e2e2e;border-radius:20px"></div>
<div class="t" id="t46" style="left:2682.61px;top:2016.71px;font-size:34px;color:#777777;transform:scaleX(1.0118);transform-origin:0 0;">Ask anything (⌘L), @ to mention, / for workflows</div>
<div class="t" id="t47" style="left:2789.73px;top:2094.01px;font-size:34px;color:#a0a0a0;transform:scaleX(0.9395);transform-origin:0 0;">Planning</div>
<div class="t" id="t48" style="left:3002.03px;top:2094.01px;font-size:34px;color:#a0a0a0;transform:scaleX(0.9408);transform-origin:0 0;">Claude Opus 4.5 (Thinking)</div>
<div class="a" style="left:3703.7px;top:2081.7px;width:63.4px;height:63.4px;border-radius:50%;background:#3a3b3e"></div>
<div class="t" id="t49" style="left:450.00px;top:2197.01px;font-size:34px;color:#cccccc;transform:scaleX(0.9056);transform-origin:0 0;">0</div>
<div class="t" id="t50" style="left:526.45px;top:2197.01px;font-size:34px;color:#cccccc;transform:scaleX(0.9333);transform-origin:0 0;">0</div>
<div class="t" id="t51" style="left:2471.96px;top:2196.86px;font-size:33px;color:#cccccc;transform:scaleX(1.0191);transform-origin:0 0;">Ln 1, Col 1</div>
<div class="t" id="t52" style="left:2682.97px;top:2196.86px;font-size:33px;color:#cccccc;transform:scaleX(1.0276);transform-origin:0 0;">Spaces: 3</div>
<div class="t" id="t53" style="left:2877.87px;top:2196.86px;font-size:33px;color:#cccccc;transform:scaleX(1.0659);transform-origin:0 0;">UTF-8</div>
<div class="t" id="t54" style="left:3021.00px;top:2196.86px;font-size:33px;color:#cccccc;transform:scaleX(1.0000);transform-origin:0 0;">LF</div>
<div class="t" id="t55" style="left:3157.52px;top:2196.86px;font-size:33px;color:#cccccc;transform:scaleX(1.0483);transform-origin:0 0;">Markdown</div>
<div class="t" id="t56" style="left:3362.45px;top:2196.86px;font-size:33px;color:#cccccc;transform:scaleX(1.0762);transform-origin:0 0;">Antigravity - Settings</div>
<svg class="ov" width="4096" height="2304"><rect x="3193.9" y="93" width="13.1" height="29.7" rx="3.5" fill="none" stroke="#cccccc" stroke-width="2.6"/><rect x="3215.6" y="93.5" width="10.5" height="10" rx="3" fill="none" stroke="#cccccc" stroke-width="2.6"/><rect x="3215.6" y="112.7" width="10.5" height="10" rx="3" fill="none" stroke="#cccccc" stroke-width="2.6"/><rect x="3256.5" y="90.5" width="34.7" height="34.7" rx="4.5" fill="none" stroke="#cccccc" stroke-width="2.6"/><path d="M3256.5,95 a4.5,4.5 0 0 1 4.5,-4.5 H3271.3 V125.2 H3261 a4.5,4.5 0 0 1 -4.5,-4.5 Z" fill="#cccccc" /><rect x="3322.1" y="90.5" width="34.2" height="34.7" rx="4.5" fill="none" stroke="#cccccc" stroke-width="2.6"/><path d="M3322.1,115.4 H3356.3" fill="none" stroke="#cccccc" stroke-width="2.6" stroke-linecap="round" stroke-linejoin="round" /><rect x="3387.3" y="90.5" width="35.1" height="34.7" rx="4.5" fill="none" stroke="#cccccc" stroke-width="2.6"/><path d="M3408.1,90.5 H3417.9 a4.5,4.5 0 0 1 4.5,4.5 V120.7 a4.5,4.5 0 0 1 -4.5,4.5 H3408.1 Z" fill="#cccccc" /><circle cx="3476" cy="101.3" r="13.6" fill="none" stroke="#cccccc" stroke-width="2.6"/><path d="M3466.3,111.8 L3451.8,127.8" fill="none" stroke="#cccccc" stroke-width="2.6" stroke-linecap="round" stroke-linejoin="round" /><path d="M3517.8,92.3 V123.7" fill="none" stroke="#5a5a5a" stroke-width="2.4" stroke-linecap="round" stroke-linejoin="round" /><circle cx="3559.8" cy="107.7" r="19.3" fill="#cccccc" stroke="none" stroke-width="0"/><circle cx="3559.8" cy="107.7" r="9.0" fill="#cccccc" stroke="#181818" stroke-width="2.5"/><path d="M3559.8,98.4 H3578.5" fill="none" stroke="#181818" stroke-width="2.5" stroke-linecap="round" stroke-linejoin="round" /><path d="M3551.8,112.2 L3543.2,97.8" fill="none" stroke="#181818" stroke-width="2.5" stroke-linecap="round" stroke-linejoin="round" /><path d="M3567.6,112.5 L3558.5,127.5" fill="none" stroke="#181818" stroke-width="2.5" stroke-linecap="round" stroke-linejoin="round" /><path d="M3639.16,104.34 L3643.79,105.05 L3643.79,110.55 L3639.16,111.26 L3636.13,112.16 L3637.64,114.94 L3640.41,118.72 L3636.52,122.61 L3632.74,119.84 L3629.96,118.33 L3629.06,121.36 L3628.35,125.99 L3622.85,125.99 L3622.14,121.36 L3621.24,118.33 L3618.46,119.84 L3614.68,122.61 L3610.79,118.72 L3613.56,114.94 L3615.07,112.16 L3612.04,111.26 L3607.41,110.55 L3607.41,105.05 L3612.04,104.34 L3615.07,103.44 L3613.56,100.66 L3610.79,96.88 L3614.68,92.99 L3618.46,95.76 L3621.24,97.27 L3622.14,94.24 L3622.85,89.61 L3628.35,89.61 L3629.06,94.24 L3629.96,97.27 L3632.74,95.76 L3636.52,92.99 L3640.41,96.88 L3637.64,100.66 L3636.13,103.44 Z" fill="none" stroke="#cccccc" stroke-width="2.6" stroke-linecap="round" stroke-linejoin="round" /><circle cx="3625.6" cy="107.8" r="4.4" fill="none" stroke="#cccccc" stroke-width="2.6"/><defs><clipPath id="av"><circle cx="3699.2" cy="107.4" r="21.6"/></clipPath></defs><g clip-path="url(#av)"><rect x="3676" y="84" width="47" height="47" fill="#e3a570"/><path d="M3676,84 H3701 L3693,95 L3687,103 L3676,112 Z" fill="#f3b67f"/><path d="M3699,84 H3723 V114 L3713,107 L3697,96 Z" fill="#bdd3a6"/><path d="M3707,88 L3716,94 L3712,101 L3704,97 Z" fill="#d9e6cf"/><path d="M3690,94.5 L3698,95.5 L3723,110 V120 L3718,117 L3689,101 Z" fill="#4b3a19"/><ellipse cx="3686.8" cy="108.5" rx="3.8" ry="5.2" fill="#34343a"/><path d="M3684,114 L3692,112.5 L3701,124 L3699,131 H3681 Z" fill="#8b3e2d"/><ellipse cx="3702.8" cy="121.5" rx="3.8" ry="6" fill="#5d6a98"/></g><path d="M3733.5,103.5 L3746,115.5 L3758.5,103.5" fill="none" stroke="#cccccc" stroke-width="2.6" stroke-linecap="round" stroke-linejoin="round" /><path d="M334.2,204.5 H327 a3.5,3.5 0 0 0 -3.5,3.5 V232.5 a3.5,3.5 0 0 0 3.5,3.5 H345 a3.5,3.5 0 0 0 3.5,-3.5 V225" fill="none" stroke="#cccccc" stroke-width="3" stroke-linecap="round" stroke-linejoin="round" /><path d="M339.5,192.6 H353 L361,200.6 V220.5 a3.5,3.5 0 0 1 -3.5,3.5 H339.5 a3.5,3.5 0 0 1 -3.5,-3.5 V196.1 a3.5,3.5 0 0 1 3.5,-3.5 Z" fill="none" stroke="#cccccc" stroke-width="3" stroke-linecap="round" stroke-linejoin="round" /><path d="M353,192.6 V200.6 H361" fill="none" stroke="#cccccc" stroke-width="3" stroke-linecap="round" stroke-linejoin="round" /><circle cx="349.7" cy="321.6" r="15.3" fill="none" stroke="#858585" stroke-width="3"/><path d="M338.6,332.6 L322,351.5" fill="none" stroke="#858585" stroke-width="3" stroke-linecap="round" stroke-linejoin="round" /><circle cx="332.6" cy="426.2" r="5.2" fill="none" stroke="#858585" stroke-width="2.8"/><circle cx="354.2" cy="435.4" r="5.2" fill="none" stroke="#858585" stroke-width="2.8"/><circle cx="332.6" cy="460.2" r="5.2" fill="none" stroke="#858585" stroke-width="2.8"/><path d="M332.6,431.4 V455" fill="none" stroke="#858585" stroke-width="2.8" stroke-linecap="round" stroke-linejoin="round" /><path d="M333.4,452.5 C335,448 339,447 344,447 C350,447 354.2,445 354.2,440.6" fill="none" stroke="#858585" stroke-width="2.8" stroke-linecap="round" stroke-linejoin="round" /><path d="M336.1,555.5 V534.6 L366.3,553.8 L347.5,566.8" fill="none" stroke="#858585" stroke-width="3" stroke-linecap="round" stroke-linejoin="round" /><ellipse cx="331.4" cy="571.5" rx="6.3" ry="9.6" fill="none" stroke="#858585" stroke-width="2.8"/><path d="M325.5,566.7 H337.3 M319.5,562.5 L324.5,566.3 M343.3,562.5 L338.3,566.3 M319.3,571.7 H324.7 M343.5,571.7 H338.1 M319.7,581.5 L324.5,577.7 M343.1,581.5 L338.3,577.7" fill="none" stroke="#858585" stroke-width="2.8" stroke-linecap="round" stroke-linejoin="round" /><path d="M339.5,686 H324.5 a2,2 0 0 1 -2,-2 V656 a2,2 0 0 1 2,-2 H360.5 a2,2 0 0 1 2,2 V669.5" fill="none" stroke="#858585" stroke-width="3" stroke-linecap="round" stroke-linejoin="round" /><path d="M330,692.3 H341" fill="none" stroke="#858585" stroke-width="3" stroke-linecap="round" stroke-linejoin="round" /><circle cx="355.3" cy="684.2" r="10.8" fill="none" stroke="#858585" stroke-width="3"/><path d="M350.6,681.3 L353.4,684.6 L350.6,688 M360,680.3 L357.2,683.6 L360,687" fill="none" stroke="#858585" stroke-width="2.4" stroke-linecap="round" stroke-linejoin="round" /><path d="M327,771 H340.5 a2,2 0 0 1 2,2 V788.3 H359.2 a2,2 0 0 1 2,2 V803.7 a2,2 0 0 1 -2,2 H329 a2,2 0 0 1 -2,-2 Z" fill="none" stroke="#858585" stroke-width="2.9" stroke-linecap="round" stroke-linejoin="round" /><path d="M327,788.3 H342.5 V805.7" fill="none" stroke="#858585" stroke-width="2.9" stroke-linecap="round" stroke-linejoin="round" /><path d="M354.4,768 L364,777.7 L354.4,787.4 L344.8,777.7 Z" fill="none" stroke="#858585" stroke-width="2.9" stroke-linecap="round" stroke-linejoin="round" /><path d="M335,881.5 H352 M338.4,881.5 V894 L325.8,920.5 a1,1 0 0 0 1,1.3 H360 a1,1 0 0 0 1,-1.3 L348.6,894 V881.5 M331.5,906.5 H355.5" fill="none" stroke="#858585" stroke-width="2.9" stroke-linecap="round" stroke-linejoin="round" /><circle cx="1140.4" cy="205.4" r="2.6" fill="#cccccc" stroke="none" stroke-width="0"/><circle cx="1154.1" cy="205.4" r="2.6" fill="#cccccc" stroke="none" stroke-width="0"/><circle cx="1167.5" cy="205.4" r="2.6" fill="#cccccc" stroke="none" stroke-width="0"/><path d="M956.5,296.6 H947 a1.2,1.2 0 0 1 -1.2,-1.2 V266.6 a1.2,1.2 0 0 1 1.2,-1.2 H961.3 L971,275 V279.2" fill="none" stroke="#cccccc" stroke-width="2.5" stroke-linecap="round" stroke-linejoin="round" /><path d="M961.3,265.6 V275.2 H971" fill="none" stroke="#cccccc" stroke-width="2.5" stroke-linecap="round" stroke-linejoin="round" /><path d="M971.9,286.2 V303.6 M963.2,294.9 H980.6" fill="none" stroke="#cccccc" stroke-width="2.5" stroke-linecap="round" stroke-linejoin="round" /><path d="M1021,296.6 H1009.2 a1.2,1.2 0 0 1 -1.2,-1.2 V266.8 a1.2,1.2 0 0 1 1.2,-1.2 H1019.6 L1023,269 H1041 a1.2,1.2 0 0 1 1.2,1.2 V279.2" fill="none" stroke="#cccccc" stroke-width="2.5" stroke-linecap="round" stroke-linejoin="round" /><path d="M1008,273.8 H1019.6 L1023,270.2" fill="none" stroke="#cccccc" stroke-width="2.5" stroke-linecap="round" stroke-linejoin="round" /><path d="M1037,286.2 V303.6 M1028.3,294.9 H1045.7" fill="none" stroke="#cccccc" stroke-width="2.5" stroke-linecap="round" stroke-linejoin="round" /><path d="M1096,268.5 A14.2,14.2 0 1 1 1079.8,273.8" fill="none" stroke="#cccccc" stroke-width="2.5" stroke-linecap="round" stroke-linejoin="round" /><path d="M1074.8,267.5 H1083.4 V276" fill="none" stroke="#cccccc" stroke-width="2.5" stroke-linecap="round" stroke-linejoin="round" /><path d="M1150,275.5 V270.8 a2.5,2.5 0 0 1 2.5,-2.5 H1167 a2.5,2.5 0 0 1 2.5,2.5 V286 a2.5,2.5 0 0 1 -2.5,2.5 H1162.5" fill="none" stroke="#cccccc" stroke-width="2.5" stroke-linecap="round" stroke-linejoin="round" /><rect x="1141.7" y="277" width="20.2" height="19.6" rx="3" fill="none" stroke="#cccccc" stroke-width="2.5"/><path d="M1145.8,286.8 H1158.2" fill="none" stroke="#cccccc" stroke-width="2.5" stroke-linecap="round" stroke-linejoin="round" /><path d="M414.3,277.6 L427.5,290 L440.7,277.6" fill="none" stroke="#cccccc" stroke-width="2.8" stroke-linecap="round" stroke-linejoin="round" /><path d="M450,337.6 L463.2,350 L476.4,337.6" fill="none" stroke="#cccccc" stroke-width="2.8" stroke-linecap="round" stroke-linejoin="round" /><path d="M471.7,396.7 L485.2,410 L498.7,396.7" fill="none" stroke="#cccccc" stroke-width="2.8" stroke-linecap="round" stroke-linejoin="round" /><path d="M422.5,2082.5 L435,2094.8 L422.5,2107" fill="none" stroke="#cccccc" stroke-width="2.8" stroke-linecap="round" stroke-linejoin="round" /><path d="M422.5,2142.5 L435,2154.8 L422.5,2167" fill="none" stroke="#cccccc" stroke-width="2.8" stroke-linecap="round" stroke-linejoin="round" /><path d="M499.5,333 a3,3 0 0 1 3,-3 H507.5 a3,3 0 0 1 2.4,1.2 L513,335.2 H528.3 a3,3 0 0 1 3,3 V352.6 a3,3 0 0 1 -3,3 H502.5 a3,3 0 0 1 -3,-3 Z" fill="none" stroke="#7d8aa3" stroke-width="3.2" stroke-linecap="round" stroke-linejoin="round" /><path d="M533,415.2 H524.5 a3,3 0 0 1 -3,-3 V393.6 a3,3 0 0 1 3,-3 H530 a3,3 0 0 1 2.4,1.2 L535.2,395.4 H550 a3,3 0 0 1 3,3 V399.5" fill="none" stroke="#7d8aa3" stroke-width="3.0" stroke-linecap="round" stroke-linejoin="round" /><path d="M542.2,406.2 L538.8,410.2 L542.2,414.2 M553.8,406.2 L557.2,410.2 L553.8,414.2 M549.6,404.2 L546.4,416.4" fill="none" stroke="#f0625d" stroke-width="2.5" stroke-linecap="round" stroke-linejoin="round" /><g transform="translate(542.2,444.9) scale(1.40,1.44)"><path d="M14.25.18l.9.2.73.26.59.3.45.32.34.34.25.34.16.33.1.3.04.26.02.2-.01.13V8.5l-.05.63-.13.55-.21.46-.26.38-.3.31-.33.25-.35.19-.35.14-.33.1-.3.07-.26.04-.21.02H8.77l-.69.05-.59.14-.5.22-.41.27-.33.32-.27.35-.2.36-.15.37-.1.35-.07.32-.04.27-.02.21v3.06H3.17l-.21-.03-.28-.07-.32-.12-.35-.18-.36-.26-.36-.36-.35-.46-.32-.59-.28-.73-.21-.88-.14-1.05-.05-1.23.06-1.22.16-1.04.24-.87.32-.71.36-.57.4-.44.42-.33.42-.24.4-.16.36-.1.32-.05.24-.01h.16l.06.01h8.16v-.83H6.18l-.01-2.75-.02-.37.05-.34.11-.31.17-.28.25-.26.31-.23.38-.2.44-.18.51-.15.58-.12.64-.1.71-.06.77-.04.84-.02 1.27.05zm-6.3 1.98l-.23.33-.08.41.08.41.23.34.33.22.41.09.41-.09.33-.22.23-.34.08-.41-.08-.41-.23-.33-.33-.22-.41-.09-.41.09zm13.09 3.95l.28.06.32.12.35.18.36.27.36.35.35.47.32.59.28.73.21.88.14 1.04.05 1.23-.06 1.23-.16 1.04-.24.86-.32.71-.36.57-.4.45-.42.33-.42.24-.4.16-.36.09-.32.05-.24.02-.16-.01h-8.22v.82h5.84l.01 2.76.02.36-.05.34-.11.31-.17.29-.25.25-.31.24-.38.2-.44.17-.51.15-.58.13-.64.09-.71.07-.77.04-.84.01-1.27-.04-1.07-.14-.9-.2-.73-.25-.59-.3-.45-.33-.34-.34-.25-.34-.16-.33-.1-.3-.04-.25-.02-.2.01-.13v-5.34l.05-.64.13-.54.21-.46.26-.38.3-.32.33-.24.35-.2.35-.14.33-.1.3-.06.26-.04.21-.02.13-.01h5.84l.69-.05.59-.14.5-.21.41-.28.33-.32.27-.35.2-.36.15-.36.1-.35.07-.32.04-.28.02-.21V6.07h2.09l.14.01zm-6.47 14.25l-.23.33-.08.41.08.41.23.33.33.23.41.08.41-.08.33-.23.23-.33.08-.41-.08-.41-.23-.33-.33-.23-.41-.08-.41.08z" fill="#35c0ae"/></g><g transform="translate(520.4,515.9) scale(0.9729,0.9645)" fill="#4e9ef0"><path d="M0,14.1 V0 H4.3 L8.7,5.6 L13.1,0 H17.4 V14.1 H13.3 V6.4 L8.7,11.9 L4.1,6.4 V14.1 Z"/><path d="M25.1,0 H29.3 V7.2 H33.2 L27.2,14.1 L21.2,7.2 H25.1 Z"/></g><g transform="translate(1250.8,190.9) scale(1.0000,1.0000)" fill="#4e9ef0"><path d="M0,14.1 V0 H4.3 L8.7,5.6 L13.1,0 H17.4 V14.1 H13.3 V6.4 L8.7,11.9 L4.1,6.4 V14.1 Z"/><path d="M25.1,0 H29.3 V7.2 H33.2 L27.2,14.1 L21.2,7.2 H25.1 Z"/></g><path d="M1494.8,187.8 L1515.2,208.4 M1515.2,187.8 L1494.8,208.4" fill="none" stroke="#cccccc" stroke-width="2.6" stroke-linecap="round" stroke-linejoin="round" /><path d="M2272,213 H2258.5 a2.5,2.5 0 0 1 -2.5,-2.5 V183.3 a2.5,2.5 0 0 1 2.5,-2.5 H2285 a2.5,2.5 0 0 1 2.5,2.5 V195" fill="none" stroke="#cccccc" stroke-width="2.5" stroke-linecap="round" stroke-linejoin="round" /><path d="M2272.6,181 V212.8" fill="none" stroke="#cccccc" stroke-width="2.5" stroke-linecap="round" stroke-linejoin="round" /><circle cx="2285.6" cy="204.4" r="5.3" fill="none" stroke="#cccccc" stroke-width="2.5"/><path d="M2281.6,208.6 L2275.4,215" fill="none" stroke="#cccccc" stroke-width="2.5" stroke-linecap="round" stroke-linejoin="round" /><rect x="2326.9" y="180.8" width="32" height="32.2" rx="3.5" fill="none" stroke="#cccccc" stroke-width="2.5"/><path d="M2342.9,181 V213" fill="none" stroke="#cccccc" stroke-width="2.5" stroke-linecap="round" stroke-linejoin="round" /><path d="M2428,199.2 H2397.6 M2409.8,186.8 L2397.6,199.2 L2409.8,211.8" fill="none" stroke="#cccccc" stroke-width="2.5" stroke-linecap="round" stroke-linejoin="round" /><path d="M2467.8,199.2 H2498.4 M2486.2,186.8 L2498.4,199.2 L2486.2,211.8" fill="none" stroke="#cccccc" stroke-width="2.5" stroke-linecap="round" stroke-linejoin="round" /><circle cx="2541" cy="198.5" r="2.8" fill="#cccccc" stroke="none" stroke-width="0"/><circle cx="2554.5" cy="198.5" r="2.8" fill="#cccccc" stroke="none" stroke-width="0"/><circle cx="2568.1" cy="198.5" r="2.8" fill="#cccccc" stroke="none" stroke-width="0"/><path d="M1382.5,261.5 L1395.5,272.8 L1382.5,284" fill="none" stroke="#a0a0a0" stroke-width="2.3" stroke-linecap="round" stroke-linejoin="round" /><path d="M1508,261.5 L1521,272.8 L1508,284" fill="none" stroke="#a0a0a0" stroke-width="2.3" stroke-linecap="round" stroke-linejoin="round" /><path d="M1813.5,261.5 L1826.5,272.8 L1813.5,284" fill="none" stroke="#a0a0a0" stroke-width="2.3" stroke-linecap="round" stroke-linejoin="round" /><path d="M2074.5,261.5 L2087.5,272.8 L2074.5,284" fill="none" stroke="#a0a0a0" stroke-width="2.3" stroke-linecap="round" stroke-linejoin="round" /><g transform="translate(1847.4,261.9) scale(0.9910,0.9716)" fill="#4e9ef0"><path d="M0,14.1 V0 H4.3 L8.7,5.6 L13.1,0 H17.4 V14.1 H13.3 V6.4 L8.7,11.9 L4.1,6.4 V14.1 Z"/><path d="M25.1,0 H29.3 V7.2 H33.2 L27.2,14.1 L21.2,7.2 H25.1 Z"/></g><path d="M3538.5,190.2 V219.5 M3523.8,204.8 H3553.2" fill="none" stroke="#cccccc" stroke-width="2.6" stroke-linecap="round" stroke-linejoin="round" /><path d="M3591.2,194.8 A16,16 0 1 1 3588,204.5" fill="none" stroke="#cccccc" stroke-width="2.6" stroke-linecap="round" stroke-linejoin="round" /><path d="M3587.4,187.8 V198 H3597.1" fill="none" stroke="#cccccc" stroke-width="2.6" stroke-linecap="round" stroke-linejoin="round" /><path d="M3604.2,195.2 V204.4 L3611.2,208.8" fill="none" stroke="#cccccc" stroke-width="2.6" stroke-linecap="round" stroke-linejoin="round" /><circle cx="3655.5" cy="204.8" r="2.7" fill="#cccccc" stroke="none" stroke-width="0"/><circle cx="3669" cy="204.8" r="2.7" fill="#cccccc" stroke="none" stroke-width="0"/><circle cx="3682.5" cy="204.8" r="2.7" fill="#cccccc" stroke="none" stroke-width="0"/><path d="M3722.5,193.5 L3746,216.5 M3746,193.5 L3722.5,216.5" fill="none" stroke="#cccccc" stroke-width="2.6" stroke-linecap="round" stroke-linejoin="round" /><path d="M3715.4,326 L3705.9,335.7 L3716.2,345.4 M3705.9,335.7 H3727 A9.8,9.8 0 0 1 3727,355.3 H3719.3" fill="none" stroke="#8a8a8a" stroke-width="2.5" stroke-linecap="round" stroke-linejoin="round" /><path d="M3716.4,1237 L3706.9,1246.7 L3717.2,1256.4 M3706.9,1246.7 H3728 A9.8,9.8 0 0 1 3728,1266.3 H3720.3" fill="none" stroke="#8a8a8a" stroke-width="2.5" stroke-linecap="round" stroke-linejoin="round" /><path d="M2682,477.5 L2692,486.5 L2682,495.5" fill="none" stroke="#9a9a9a" stroke-width="2.5" stroke-linecap="round" stroke-linejoin="round" /><path d="M2681.5,1388.5 L2691.5,1397.5 L2681.5,1406.5" fill="none" stroke="#9a9a9a" stroke-width="2.5" stroke-linecap="round" stroke-linejoin="round" /><path d="M2670,1487 a2.5,2.5 0 0 1 2.5,-2.5 H2687 L2699.8,1497 V1514.5 a2.5,2.5 0 0 1 -2.5,2.5 H2672.5 a2.5,2.5 0 0 1 -2.5,-2.5 Z" fill="none" stroke="#8a8a8a" stroke-width="2.3" stroke-linecap="round" stroke-linejoin="round" /><path d="M2687,1484.5 V1494 a3,3 0 0 0 3,3 H2699.8" fill="none" stroke="#8a8a8a" stroke-width="2.3" stroke-linecap="round" stroke-linejoin="round" /><g transform="translate(2892.2,1492.8) scale(0.9759,1.0496)" fill="#4e9ef0"><path d="M0,14.1 V0 H4.3 L8.7,5.6 L13.1,0 H17.4 V14.1 H13.3 V6.4 L8.7,11.9 L4.1,6.4 V14.1 Z"/><path d="M25.1,0 H29.3 V7.2 H33.2 L27.2,14.1 L21.2,7.2 H25.1 Z"/></g><g transform="translate(2927,802.5) scale(0.9789,0.9220)" fill="#4e9ef0"><path d="M0,14.1 V0 H4.3 L8.7,5.6 L13.1,0 H17.4 V14.1 H13.3 V6.4 L8.7,11.9 L4.1,6.4 V14.1 Z"/><path d="M25.1,0 H29.3 V7.2 H33.2 L27.2,14.1 L21.2,7.2 H25.1 Z"/></g><g><path d="M2665.5,1596 Q2674,1591 2682.5,1595 Q2691,1591 2700,1596 V1618 Q2691,1613.5 2682.5,1617.5 Q2674,1613.5 2665.5,1618 Z" fill="#3b78c6"/><path d="M2667.5,1595.5 Q2675,1591.5 2681.8,1595 V1615 Q2675,1611.5 2667.5,1615 Z" fill="#f4f4f4"/><path d="M2683.2,1595 Q2690,1591.5 2698,1595.5 V1615 Q2690,1611.5 2683.2,1615 Z" fill="#f4f4f4"/><path d="M2670,1599 H2679 M2670,1603 H2679 M2670,1607 H2679 M2686,1599 H2695 M2686,1603 H2695 M2686,1607 H2695" stroke="#b8c4d6" stroke-width="1.2"/></g><path d="M2666,1916.5 a2.5,2.5 0 0 1 2.5,-2.5 H2683 L2694,1924 V1947.5 a2.5,2.5 0 0 1 -2.5,2.5 H2668.5 a2.5,2.5 0 0 1 -2.5,-2.5 Z" fill="none" stroke="#8a8a8a" stroke-width="2.2" stroke-linecap="round" stroke-linejoin="round" /><path d="M2683,1914 V1920.5 a3,3 0 0 0 3,3 H2694" fill="none" stroke="#8a8a8a" stroke-width="2.2" stroke-linecap="round" stroke-linejoin="round" /><rect x="2729.4" y="1916" width="31.6" height="32" rx="4" fill="none" stroke="#8a8a8a" stroke-width="2.2"/><path d="M2735.6,1923 L2740.4,1927.2 L2735.6,1931.2 M2743,1933.9 H2751.4" fill="none" stroke="#8a8a8a" stroke-width="2.2" stroke-linecap="round" stroke-linejoin="round" /><path d="M2793.2,1933 L2799.5,1922.5 a4,4 0 0 1 3.4,-2 H2818.3 a4,4 0 0 1 3.4,2 L2828,1933 V1935.5 a3,3 0 0 1 -3,3 H2796.2 a3,3 0 0 1 -3,-3 Z" fill="none" stroke="#8a8a8a" stroke-width="2.2" stroke-linecap="round" stroke-linejoin="round" /><path d="M2793.6,1933.2 H2801.5 Q2810.6,1942 2819.7,1933.2 H2827.6" fill="none" stroke="#8a8a8a" stroke-width="2.2" stroke-linecap="round" stroke-linejoin="round" /><path d="M2793.2,1938.5 V1943.5 a3.5,3.5 0 0 0 3.5,3.5 H2824.5 a3.5,3.5 0 0 0 3.5,-3.5 V1938.5" fill="none" stroke="#8a8a8a" stroke-width="2.2" stroke-linecap="round" stroke-linejoin="round" /><path d="M2804.5,1938.7 Q2810.6,1945.5 2816.7,1938.7" fill="none" stroke="#8a8a8a" stroke-width="2.2" stroke-linecap="round" stroke-linejoin="round" /><path d="M2693.2,2100.8 V2125.4 M2680.9,2113.1 H2705.5" fill="none" stroke="#9a9a9a" stroke-width="2.4" stroke-linecap="round" stroke-linejoin="round" /><path d="M2754,2117.5 L2764.5,2108 L2775,2117.5" fill="none" stroke="#9a9a9a" stroke-width="2.4" stroke-linecap="round" stroke-linejoin="round" /><path d="M2963.5,2117.5 L2974.5,2108 L2985.5,2117.5" fill="none" stroke="#9a9a9a" stroke-width="2.4" stroke-linecap="round" stroke-linejoin="round" /><rect x="3652.8" y="2094.4" width="11.6" height="25" rx="5.8" fill="none" stroke="#9a9a9a" stroke-width="2.8"/><path d="M3645.6,2109.5 V2111.5 a12.9,12.9 0 0 0 25.8,0 V2109.5 M3658.5,2124.5 V2132.5" fill="none" stroke="#9a9a9a" stroke-width="2.8" stroke-linecap="round" stroke-linejoin="round" /><path d="M3721.6,2113.4 H3747.8 M3734.5,2100.2 L3747.8,2113.4 L3734.5,2126.4" fill="none" stroke="#a6a6a6" stroke-width="2.8" stroke-linecap="round" stroke-linejoin="round" /><path d="M321,2206.8 L331.4,2216.6 L321,2226.6 M343.3,2197.2 L333.9,2206.8 L343.3,2216.9" fill="none" stroke="#ffffff" stroke-width="2.6" stroke-linecap="round" stroke-linejoin="round" /><circle cx="419.1" cy="2212.7" r="14.3" fill="none" stroke="#cccccc" stroke-width="2.4"/><path d="M412.4,2206 L425.8,2219.4 M425.8,2206 L412.4,2219.4" fill="none" stroke="#cccccc" stroke-width="2.4" stroke-linecap="round" stroke-linejoin="round" /><path d="M497.3,2197.6 L512.6,2225.8 H482 Z" fill="none" stroke="#cccccc" stroke-width="2.4" stroke-linecap="round" stroke-linejoin="round" /><path d="M497.3,2207.5 V2217" fill="none" stroke="#cccccc" stroke-width="2.6" stroke-linecap="round" stroke-linejoin="round" /><circle cx="497.3" cy="2221.5" r="1.4" fill="#cccccc" stroke="none" stroke-width="0"/><path d="M3113.5,2200.5 Q3108.8,2200.5 3108.8,2205 V2210.5 Q3108.8,2213.5 3107,2213.5 Q3108.8,2213.5 3108.8,2216.5 V2222 Q3108.8,2226.5 3113.5,2226.5 M3132,2200.5 Q3136.7,2200.5 3136.7,2205 V2210.5 Q3136.7,2213.5 3138.5,2213.5 Q3136.7,2213.5 3136.7,2216.5 V2222 Q3136.7,2226.5 3132,2226.5" fill="none" stroke="#cccccc" stroke-width="2.3" stroke-linecap="round" stroke-linejoin="round" /><path d="M3739,2222.5 H3763 Q3758.5,2217.5 3758.5,2211 V2208.5 a7.5,7.5 0 0 0 -15,0 V2211 Q3743.5,2217.5 3739,2222.5 Z M3747.5,2226.5 Q3751,2229 3754.5,2226.5" fill="none" stroke="#cccccc" stroke-width="2.3" stroke-linecap="round" stroke-linejoin="round" /></svg>
</div></div>
<div class="t" id="t57" style="left:3892.19px;top:2236.13px;font-size:40px;color:#8e97a0;transform:scaleX(1.0707);transform-origin:0 0;-webkit-text-stroke-width:0">@leoleex</div>
</body></html>
